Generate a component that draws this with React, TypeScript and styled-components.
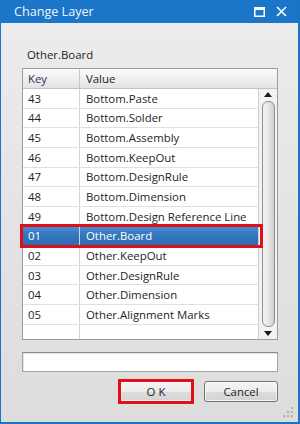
import React from 'react';
import styled, { createGlobalStyle } from 'styled-components';

const ROW_H = 19.65;

const layers: [string, string][] = [
  ['43', 'Bottom.Paste'],
  ['44', 'Bottom.Solder'],
  ['45', 'Bottom.Assembly'],
  ['46', 'Bottom.KeepOut'],
  ['47', 'Bottom.DesignRule'],
  ['48', 'Bottom.Dimension'],
  ['49', 'Bottom.Design Reference Line'],
  ['01', 'Other.Board'],
  ['02', 'Other.KeepOut'],
  ['03', 'Other.DesignRule'],
  ['04', 'Other.Dimension'],
  ['05', 'Other.Alignment Marks'],
];

const GlobalStyle = createGlobalStyle`
  html, body {
    margin: 0;
    padding: 0;
    background: #ffffff;
  }
  body {
    font-family: "Open Sans", "Noto Sans", sans-serif;
    font-size: 11.4px;
    color: #1e1e1e;
  }
`;

const Window = styled.div`
  position: relative;
  box-sizing: border-box;
  width: 300px;
  height: 424px;
  display: flex;
  flex-direction: column;
  border: solid #1c74c6;
  border-width: 0 2px 2px 1px;
  overflow: hidden;
`;

const TitleBar = styled.div`
  height: 23px;
  flex: none;
  display: flex;
  align-items: center;
  background: #1b76c9;
  color: #eef4fb;
  padding: 0 6px 0 13px;
  font-size: 12.6px;
`;

const Title = styled.span`
  flex: 1;
  margin-top: -1px;
`;

const TitleButton = styled.span`
  width: 22px;
  height: 20px;
  display: flex;
  align-items: center;
  justify-content: center;
`;

const Body = styled.div`
  flex: 1;
  display: flex;
  flex-direction: column;
  padding: 24px 20px 0 21px;
  background: linear-gradient(180deg, #ececec 0%, #e2e2e2 60%, #dddddd 100%);
`;

const Caption = styled.div`
  height: 16px;
  line-height: 16px;
  padding-left: 5px;
  margin-bottom: 5px;
`;

const Grid = styled.div`
  position: relative;
  box-sizing: border-box;
  height: 272px;
  border: 1px solid #9c9c9c;
  background: #ffffff;
  display: flex;
  flex-direction: column;
`;

const Header = styled.div`
  flex: none;
  height: 19px;
  display: flex;
  background: linear-gradient(180deg, #fbfbfb 0%, #eeeeee 55%, #e2e2e2 100%);
  border-bottom: 1px solid #c4c4c4;
`;

const Cell = styled.div<{ $key?: boolean }>`
  box-sizing: border-box;
  display: flex;
  align-items: center;
  padding-left: ${(p) => (p.$key ? '5px' : '6px')};
  width: ${(p) => (p.$key ? '57px' : 'auto')};
  flex: ${(p) => (p.$key ? 'none' : '1')};
  border-right: ${(p) => (p.$key ? '1px solid #d4d4d4' : 'none')};
  white-space: nowrap;
  overflow: hidden;
`;

const HeadCell = styled(Cell)`
  border-right-color: ${(p) => (p.$key ? '#c8c8c8' : 'transparent')};
  color: ${(p) => (p.$key ? '#3a2a5a' : '#222')};
`;

const GridBody = styled.div`
  flex: 1;
  display: flex;
  min-height: 0;
`;

const Rows = styled.div`
  flex: 1;
  display: flex;
  flex-direction: column;
`;

const Row = styled.div<{ $selected?: boolean }>`
  position: relative;
  flex: none;
  height: ${ROW_H}px;
  box-sizing: border-box;
  display: flex;
  border-bottom: 1px solid #e0e0e0;
  background: ${(p) =>
    p.$selected ? 'linear-gradient(180deg, #4a8ed2 0%, #3477bf 45%, #2c6cb3 100%)' : 'transparent'};
  color: ${(p) => (p.$selected ? '#ffffff' : 'inherit')};
`;

const FillerRow = styled.div`
  flex: 1;
  display: flex;
`;

const Highlight = styled.div`
  position: absolute;
  z-index: 2;
  left: -3px;
  right: -5px;
  top: -2px;
  bottom: -3px;
  border: 3px solid #e0101a;
  pointer-events: none;
`;

const ScrollBar = styled.div`
  flex: none;
  width: 19px;
  box-sizing: border-box;
  border-left: 1px solid #cfcfcf;
  background: #f2f2f2;
  display: flex;
  flex-direction: column;
  align-items: center;
`;

const Arrow = styled.div`
  height: 11px;
  display: flex;
  align-items: center;
  justify-content: center;
`;

const Thumb = styled.div`
  flex: 1;
  width: 13px;
  box-sizing: border-box;
  margin: 1px 0 1px;
  border: 1px solid #8e8e8e;
  border-radius: 6px;
  background: linear-gradient(90deg, #f4f4f4 0%, #e8e8e8 45%, #cfcfcf 100%);
`;

const TextBox = styled.div`
  box-sizing: border-box;
  margin-top: 12px;
  height: 20px;
  border: 1px solid #a4a4a4;
  border-top-color: #8a8a8a;
  background: #ffffff;
  box-shadow: inset 1px 1px 1px rgba(0, 0, 0, 0.12);
`;

const Buttons = styled.div`
  display: flex;
  justify-content: flex-end;
  gap: 11px;
  margin-top: 9px;
`;

const ButtonWrap = styled.div`
  position: relative;
`;

const Button = styled.button`
  box-sizing: border-box;
  width: 74px;
  height: 21px;
  padding: 0;
  border: 1px solid #737373;
  border-radius: 3px;
  background: linear-gradient(180deg, #f4f4f4 0%, #ececec 50%, #dcdcdc 51%, #d4d4d4 100%);
  box-shadow: inset 0 0 0 1px rgba(255, 255, 255, 0.7);
  font-family: inherit;
  font-size: 11.4px;
  color: #1e1e1e;
`;

const ButtonMark = styled.div`
  position: absolute;
  left: -1px;
  right: -1px;
  top: -2px;
  bottom: -2px;
  border: 3px solid #e0101a;
  pointer-events: none;
`;

const Grip = styled.svg`
  position: absolute;
  right: 5px;
  bottom: 5px;
`;

const TriangleUp = () => (
  <svg width="8" height="5" viewBox="0 0 8 5">
    <path d="M4 0 L8 5 L0 5 Z" fill="#1a1a1a" />
  </svg>
);

const TriangleDown = () => (
  <svg width="8" height="5" viewBox="0 0 8 5">
    <path d="M0 0 L8 0 L4 5 Z" fill="#1a1a1a" />
  </svg>
);

export default function App() {
  return (
    <>
      <GlobalStyle />
      <Window>
        <TitleBar>
          <Title>Change Layer</Title>
          <TitleButton>
            <svg width="11" height="10" viewBox="0 0 11 10">
              <rect x="0.75" y="0.75" width="9.5" height="8.5" fill="none" stroke="#ffffff" strokeWidth="1.5" />
              <rect x="0" y="0" width="11" height="3" fill="#ffffff" />
            </svg>
          </TitleButton>
          <TitleButton>
            <svg width="11" height="11" viewBox="0 0 11 11">
              <path d="M1 1 L10 10 M10 1 L1 10" stroke="#ffffff" strokeWidth="1.6" />
            </svg>
          </TitleButton>
        </TitleBar>
        <Body>
          <Caption>Other.Board</Caption>
          <Grid>
            <Header>
              <HeadCell $key>Key</HeadCell>
              <HeadCell>Value</HeadCell>
            </Header>
            <GridBody>
              <Rows>
                {layers.map(([key, value]) => {
                  const selected = key === '01';
                  return (
                    <Row key={key} $selected={selected}>
                      <Cell $key>{key}</Cell>
                      <Cell>{value}</Cell>
                      {selected && <Highlight />}
                    </Row>
                  );
                })}
                <FillerRow>
                  <Cell $key />
                  <Cell />
                </FillerRow>
              </Rows>
              <ScrollBar>
                <Arrow>
                  <TriangleUp />
                </Arrow>
                <Thumb />
                <Arrow>
                  <TriangleDown />
                </Arrow>
              </ScrollBar>
            </GridBody>
          </Grid>
          <TextBox />
          <Buttons>
            <ButtonWrap>
              <Button>O K</Button>
              <ButtonMark />
            </ButtonWrap>
            <ButtonWrap>
              <Button>Cancel</Button>
            </ButtonWrap>
          </Buttons>
        </Body>
        <Grip width="10" height="10" viewBox="0 0 10 10">
          <rect x="8" y="0" width="2" height="2" fill="#b0b0b0" />
          <rect x="4" y="4" width="2" height="2" fill="#b0b0b0" />
          <rect x="8" y="4" width="2" height="2" fill="#b0b0b0" />
          <rect x="0" y="8" width="2" height="2" fill="#b0b0b0" />
          <rect x="4" y="8" width="2" height="2" fill="#b0b0b0" />
          <rect x="8" y="8" width="2" height="2" fill="#b0b0b0" />
        </Grip>
      </Window>
    </>
  );
}
